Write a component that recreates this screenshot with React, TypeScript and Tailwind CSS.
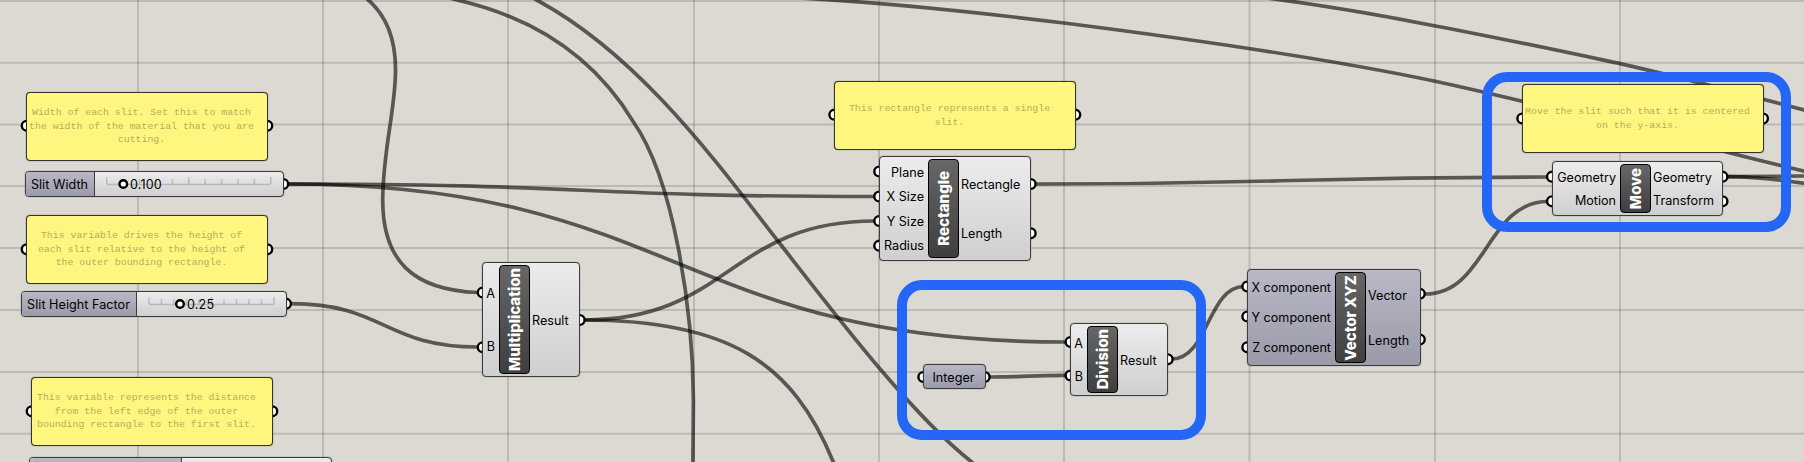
import React from 'react';

type Point = [number, number];

const gridX = [138, 323, 508, 694, 879, 1064, 1249.5, 1435, 1620];
const gridY = [1, 62.8, 124.5, 186, 248, 310, 372, 433.7];

/** Horizontal-tangent wire between an output grip and an input grip. */
function link([x1, y1]: Point, [x2, y2]: Point): string {
  const m = (x1 + x2) / 2;
  return `M${x1} ${y1} C${m} ${y1} ${m} ${y2} ${x2} ${y2}`;
}

const wires: string[] = [
  'M366 -2 C387 15 396 40 395.5 72 C395 112 383 150 382.7 200 C382.7 260 412 290 478 292.5',
  link([288, 184], [875, 196.5]),
  link([288, 184], [1066, 342]),
  link([291, 303.7], [478, 347]),
  link([584, 320], [875, 221]),
  'M584 320 C729 320 793 363 833.3 462 L836 469',
  'M446 -3 L457 0 C549 21 602 70 633.3 121.7 C674 180 693 310 693.4 400 L692.9 464',
  'M528 -5 L536.7 0 C641 56 720 167 778.7 242 C838 318 910 413 971.7 462 L980 469',
  'M800 -2 C890 3 975 12 1064 23 C1190 39 1320 57 1434 81 C1540 104 1640 130 1730 153 L1806 171.7',
  'M1255 -3.5 C1315 4 1375 14 1434 25.7 C1505 39 1570 53 1620 63.6 C1680 77 1740 93 1806 110.5',
  link([1034, 184], [1548, 177]),
  link([1425, 294], [1548, 201.5]),
  link([1172, 359], [1244, 286.5]),
  link([990, 377], [1066, 375.3]),
  'M1728 176.7 L1806 176',
  'M1728 176.7 C1765 177 1785 181 1806 183.5',
];

const grips: Point[] = [
  [26.7, 125.8], [267.3, 125.8],
  [26.7, 249.3], [267.3, 249.3],
  [31.7, 411.3], [272.3, 411.3],
  [834.3, 114.7], [1075.3, 114.7],
  [1522.3, 118.5], [1763, 118.5],
  [283.3, 184], [286, 303.7],
  [482.7, 292.5], [482.7, 347.3], [579.7, 320],
  [879.2, 171.5], [879.2, 196.5], [879.2, 221], [879.2, 245.7], [1030.7, 184], [1030.7, 233.3],
  [923.3, 377], [984.7, 377],
  [1070.5, 342], [1070.5, 375.5], [1167.7, 359.3],
  [1247.3, 286.5], [1247.3, 316.5], [1247.3, 347.3], [1419.8, 293.8], [1419.8, 339.5],
  [1552, 176.7], [1552, 201.3], [1722.5, 176.7], [1722.5, 201.3],
];

function Note({ place, lines }: { place: string; lines: string[] }) {
  return (
    <div
      className={`absolute flex h-[69px] w-[242px] flex-col items-center justify-center rounded-[4px] border border-[#333330] bg-[#fff680] pr-[11px] shadow-[0_0_1px_rgba(0,0,0,0.7)] ${place}`}
    >
      {lines.map((line) => (
        <span
          key={line}
          className="font-['Liberation_Mono',monospace] text-[9.87px] leading-[13.5px] whitespace-pre text-[#b5af5a]"
        >
          {line}
        </span>
      ))}
    </div>
  );
}

const label = "font-['Inter',sans-serif] text-[12.6px] leading-4 whitespace-pre text-black";

type ComponentProps = {
  place: string;
  inputs: string[];
  outputs: string[];
  name: string;
  left: string;
  tone?: 'light' | 'violet';
};

function Component({ place, inputs, outputs, name, left, tone = 'light' }: ComponentProps) {
  const fill = tone === 'light' ? 'from-[#ececec] to-[#cfcfcf]' : 'from-[#b9b8c6] to-[#9b9aa8]';
  return (
    <div
      className={`absolute flex rounded-[4px] border border-[#3c3c3c] bg-linear-to-b py-[2px] shadow-[0_0_1px_rgba(0,0,0,0.7)] ${fill} ${place}`}
    >
      <div className={`flex shrink-0 flex-col items-end pr-[4px] ${left}`}>
        {inputs.map((text) => (
          <div key={text} className="flex flex-1 items-center">
            <span className={label}>{text}</span>
          </div>
        ))}
      </div>
      <div className="flex w-[31px] shrink-0 items-center justify-center rounded-[4px] border border-black bg-linear-to-b from-[#676767] to-[#3f3f3f]">
        <span className="rotate-180 font-['Inter',sans-serif] text-[15px] leading-5 font-extrabold whitespace-pre text-white [writing-mode:vertical-rl]">
          {name}
        </span>
      </div>
      <div className="flex flex-1 flex-col pt-[2px] pl-[2px]">
        {outputs.map((text) => (
          <div key={text} className="flex flex-1 items-center">
            <span className={label}>{text}</span>
          </div>
        ))}
      </div>
    </div>
  );
}

type SliderProps = {
  place: string;
  labelWidth: string;
  name: string;
  value: string;
  valuePad: string;
  start: number;
  step: number;
  knob: number;
};

function Slider({ place, labelWidth, name, value, valuePad, start, step, knob }: SliderProps) {
  return (
    <div
      className={`absolute flex h-[26px] overflow-hidden rounded-[4px] border border-[#3c3c3c] bg-linear-to-b from-[#ececec] to-[#cfcfcf] shadow-[0_0_1px_rgba(0,0,0,0.7)] ${place}`}
    >
      <div
        className={`flex shrink-0 items-center justify-center border-r border-[#3c3c3c] bg-linear-to-b from-[#b9b8c6] to-[#9b9aa8] pt-[2px] pr-px ${labelWidth}`}
      >
        <span className={`${label} tracking-[0.04px]`}>{name}</span>
      </div>
      {value && (
        <div className={`relative flex flex-1 items-center pt-[2px] ${valuePad}`}>
          <svg className="absolute top-0 left-0 h-6 w-full" fill="none">
            <g stroke="#000" strokeOpacity="0.16" strokeWidth="1.6">
              <path d={`M${start} 12.5H${start + step * 10}`} />
              {Array.from({ length: 11 }, (_, i) => (
                <path key={i} d={`M${start + i * step} ${i % 5 === 0 ? 5 : 7.2}V12`} />
              ))}
            </g>
            <circle cx={knob} cy="12" r="3.8" fill="#fff" stroke="#000" strokeWidth="2.4" />
          </svg>
          <span className={`relative ${label} tracking-[0.15px]`}>{value}</span>
        </div>
      )}
    </div>
  );
}

export default function App() {
  return (
    <div className="relative h-[462px] w-[1804px] overflow-hidden bg-[#dcd9d2]">
      <svg className="absolute inset-0" width="1804" height="462" fill="none">
        <g stroke="#000" strokeOpacity="0.14" strokeWidth="2">
          {gridX.map((x) => (
            <path key={x} d={`M${x} 0V462`} />
          ))}
          {gridY.map((y) => (
            <path key={y} d={`M0 ${y}H1804`} />
          ))}
        </g>
        <g stroke="#000" strokeOpacity="0.6" strokeWidth="3.7">
          {wires.map((d) => (
            <path key={d} d={d} />
          ))}
        </g>
        <g fill="#fff" stroke="#000" strokeWidth="2.4">
          {grips.map(([x, y]) => (
            <circle key={`${x}-${y}`} cx={x} cy={y} r="4.9" />
          ))}
        </g>
      </svg>

      <Note
        place="top-[92px] left-[26px]"
        lines={['Width of each slit. Set this to match', 'the width of the material that you are', 'cutting.']}
      />
      <Note
        place="top-[215px] left-[26px]"
        lines={['This variable drives the height of', 'each slit relative to the height of', 'the outer bounding rectangle.']}
      />
      <Note
        place="top-[377px] left-[31px]"
        lines={['This variable represents the distance', 'from the left edge of the outer', 'bounding rectangle to the first slit.']}
      />
      <Note place="top-[81px] left-[834px]" lines={['This rectangle represents a single', 'slit.']} />
      <Note place="top-[84px] left-[1522px]" lines={['Move the slit such that it is centered', 'on the y-axis.']} />

      <Slider
        place="top-[171px] left-[25px] w-[259px]"
        labelWidth="w-[69px]"
        name="Slit Width"
        value="0.100"
        valuePad="pl-[35px]"
        start={11.8}
        step={16.4}
        knob={28.3}
      />
      <Slider
        place="top-[291px] left-[21px] w-[266px]"
        labelWidth="w-[115px]"
        name="Slit Height Factor"
        value="0.25"
        valuePad="pl-[50px]"
        start={12}
        step={12.5}
        knob={43}
      />
      <Slider
        place="top-[457px] left-[29px] w-[303px]"
        labelWidth="w-[152px]"
        name=""
        value=""
        valuePad=""
        start={0}
        step={0}
        knob={0}
      />

      <Component
        place="top-[262px] left-[482px] h-[115px] w-[98px]"
        left="w-4 pt-[2px]"
        inputs={['A', 'B']}
        name="Multiplication"
        outputs={['Result']}
      />
      <Component
        place="top-[156px] left-[879px] h-[105px] w-[152px]"
        left="w-12 pt-[2px]"
        inputs={['Plane', 'X Size', 'Y Size', 'Radius']}
        name="Rectangle"
        outputs={['Rectangle', 'Length']}
      />
      <Component
        place="top-[323px] left-[1070px] h-[73px] w-[98px]"
        left="w-4 pt-[2px]"
        inputs={['A', 'B']}
        name="Division"
        outputs={['Result']}
      />
      <Component
        place="top-[269px] left-[1247px] h-[97px] w-[174px]"
        left="w-[87px] pt-px"
        inputs={['X component', 'Y component', 'Z component']}
        name="Vector XYZ"
        outputs={['Vector', 'Length']}
        tone="violet"
      />
      <Component
        place="top-[161px] left-[1552px] h-[55px] w-[171px]"
        left="w-[67px] pt-[2px]"
        inputs={['Geometry', 'Motion']}
        name="Move"
        outputs={['Geometry', 'Transform']}
      />
      <div className="absolute top-[364px] left-[923px] flex h-[25px] w-[63px] items-center justify-center rounded-[4px] border border-[#3c3c3c] bg-linear-to-b from-[#b9b8c6] to-[#9b9aa8] pt-[3px] pr-[2px] shadow-[0_0_1px_rgba(0,0,0,0.7)]">
        <span className={`${label} tracking-[0.04px]`}>Integer</span>
      </div>

      <div className="absolute top-[280px] left-[897px] h-[160px] w-[309px] rounded-[25px] border-[10px] border-[#2467f6]" />
      <div className="absolute top-[72px] left-[1482px] h-[160px] w-[309px] rounded-[25px] border-[10px] border-[#2467f6]" />
    </div>
  );
}
